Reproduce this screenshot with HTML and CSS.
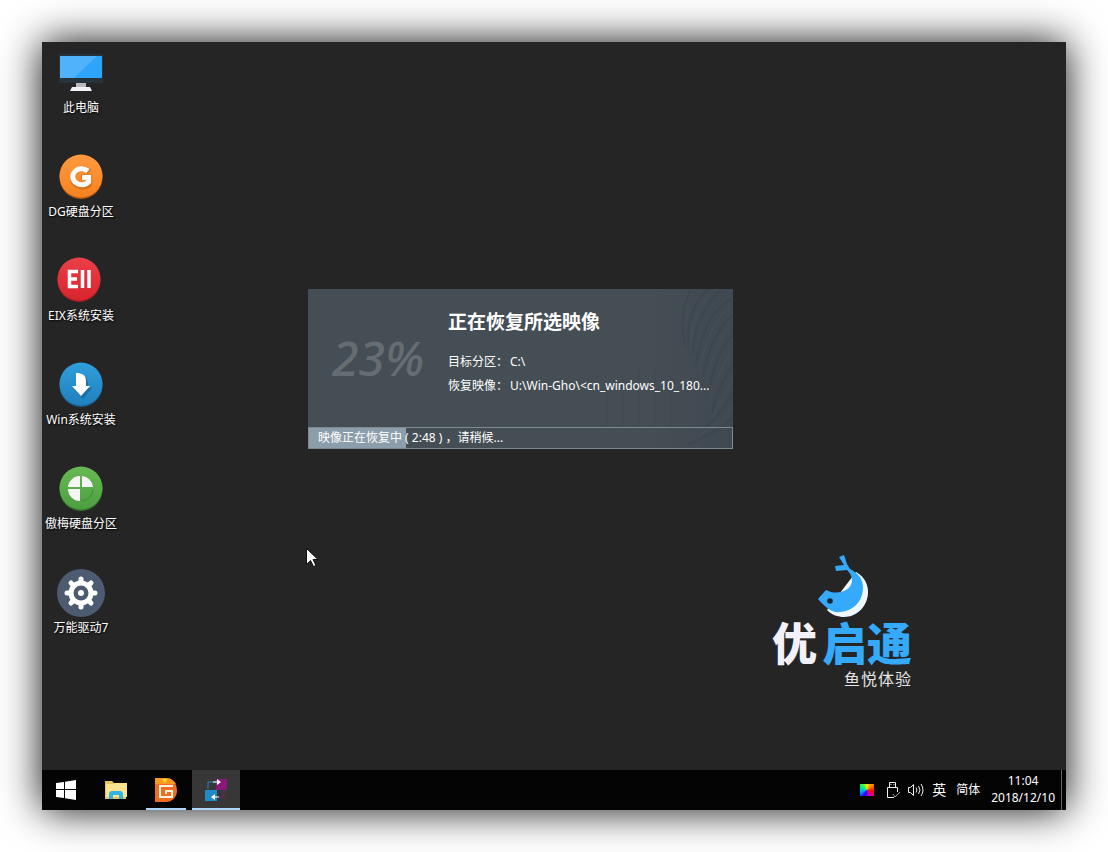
FILE: index.html
```
<!DOCTYPE html>
<html lang="zh-CN">
<head>
    <meta charset="UTF-8">
    <meta name="viewport" content="width=device-width, initial-scale=1.0">
    <title>优启通</title>
    <link rel="stylesheet" href="styles.css">
</head>
<body>
    <div class="screen">
        <main class="desktop">
            <div class="shortcuts">
                <button class="shortcut">
                    <svg class="shortcut-icon" viewBox="0 0 48 48">
                        <path d="M2 5h44v29H2z" fill="#26323c"/>
                        <path d="M3 7h42v22H3z" fill="#2ea4fa"/>
                        <path d="M3 7h37L17 29H3z" fill="#50b2fb"/>
                        <path d="M19 34h10v5H19z" fill="#b9b7c0"/>
                        <path d="M15 38h18l2 4H13z" fill="#f3f1f7"/>
                    </svg>
                    <span>此电脑</span>
                </button>
                <button class="shortcut">
                    <svg class="shortcut-icon" viewBox="0 0 48 48">
                        <defs><linearGradient id="orange" x2="0" y2="1"><stop stop-color="#ff9a40"/><stop offset="1" stop-color="#f5821f"/></linearGradient></defs>
                        <circle cx="24" cy="24.500" r="21.500" fill="#b85a14"/>
                        <circle cx="24" cy="23" r="21.500" fill="url(#orange)"/>
                        <path d="M32.500 18.500A10 9 0 1 0 32 32V24H24" fill="none" stroke="#c96516" stroke-width="5" opacity=".7"/>
                        <path d="M31 18A9 8 0 1 0 31.500 29V24.500H25" fill="none" stroke="#fbfbfb" stroke-width="5"/>
                    </svg>
                    <span>DG硬盘分区</span>
                </button>
                <button class="shortcut">
                    <svg class="shortcut-icon" viewBox="0 0 48 48">
                        <defs><linearGradient id="red" x2="0" y2="1"><stop stop-color="#ea4048"/><stop offset="1" stop-color="#d8242e"/></linearGradient></defs>
                        <circle cx="22" cy="23.500" r="21.500" fill="#a91d26"/>
                        <circle cx="22" cy="22" r="21.500" fill="url(#red)"/>
                        <path d="M21 14.500H12.500V29.500H21M12.500 22H20M25.500 13v18M32 13v18" fill="none" stroke="#fff" stroke-width="3.500"/>
                    </svg>
                    <span>EIX系统安装</span>
                </button>
                <button class="shortcut">
                    <svg class="shortcut-icon" viewBox="0 0 48 48">
                        <defs><linearGradient id="blue" x2="0" y2="1"><stop stop-color="#2f9edb"/><stop offset="1" stop-color="#2080bd"/></linearGradient></defs>
                        <circle cx="24" cy="24.500" r="21.500" fill="#195f91"/>
                        <circle cx="24" cy="23" r="21.500" fill="url(#blue)"/>
                        <path d="M21 14c6 0 10 2 10 9v4h4l-9 11-9-10h4z" fill="#17659a" opacity=".7"/>
                        <path d="M19 12c6 0 10 2 10 8v5h4l-9 10-9-10h4z" fill="#fff"/>
                    </svg>
                    <span>Win系统安装</span>
                </button>
                <button class="shortcut">
                    <svg class="shortcut-icon" viewBox="0 0 48 48">
                        <defs><linearGradient id="green" x2="0" y2="1"><stop stop-color="#68b955"/><stop offset="1" stop-color="#4d9e40"/></linearGradient></defs>
                        <circle cx="24" cy="24.500" r="21.500" fill="#34752b"/>
                        <circle cx="24" cy="23" r="21.500" fill="url(#green)"/>
                        <path d="M23 11v11H11a12 12 0 0 1 12-11zM25 11a12 12 0 0 1 11 11H25zM11 24h12v12a12 12 0 0 1-12-12z" fill="#f5f5f5"/>
                        <path d="M36 24a12 12 0 0 1-11 12" fill="none" stroke="#3f8a34"/>
                    </svg>
                    <span>傲梅硬盘分区</span>
                </button>
                <button class="shortcut">
                    <svg class="shortcut-icon" viewBox="0 0 48 48">
                        <circle cx="24" cy="24" r="24" fill="#4d5b71"/>
                        <g stroke="#fff" stroke-width="5" stroke-linecap="round">
                            <path d="M24 10v28M10 24h28M14 14l20 20M34 14L14 34"/>
                        </g>
                        <circle cx="24" cy="24" r="12.500" fill="#fff"/>
                        <circle cx="24" cy="24" r="7.500" fill="#4d5b71"/>
                        <circle cx="24" cy="24" r="3" fill="#fff"/>
                    </svg>
                    <span>万能驱动7</span>
                </button>
            </div>

            <section class="dialog" aria-labelledby="dialogTitle">
                <svg class="feather" viewBox="0 0 150 160" fill="none">
                    <defs><linearGradient id="shade"><stop stop-color="#3d474f" stop-opacity="0"/><stop offset="1" stop-color="#3d474f"/></linearGradient></defs>
                    <path d="M70 0h80v160H60z" fill="url(#shade)" opacity=".7"/>
                    <g stroke="#374149" stroke-width="2" opacity=".35">
                        <path d="M150 8Q120 26 113 76M150 26Q128 44 120 88M150 46Q134 62 126 100"/>
                        <path d="M125 0Q98 27 107 65M108 0Q95 24 102 56M139 0Q112 24 109 65"/>
                        <path d="M150 76Q138 91 129 124M150 104Q143 119 122 139M150 128Q138 142 104 156"/>
                    </g>
                    <g stroke="#5a6973" opacity=".22">
                        <path d="M150 16Q124 34 117 82M150 35Q131 52 124 94M150 60Q138 75 127 112M132 0Q105 25 108 65"/>
                        <path d="M150 90Q141 106 128 130M150 116Q143 131 114 147"/>
                    </g>
                    <g stroke="#3b454c" stroke-width="2" opacity=".12">
                        <path d="M24 140v-35M40 138V90M56 140V78M72 138V82M88 140V86"/>
                    </g>
                </svg>
                <div class="dialog-main">
                    <div class="percent">23%</div>
                    <div class="details">
                        <h1 id="dialogTitle">正在恢复所选映像</h1>
                        <p>目标分区：<span>C:\</span></p>
                        <p>恢复映像：<span>U:\Win-Gho\&lt;cn_windows_10_180...</span></p>
                    </div>
                </div>
                <div class="progress" role="progressbar" aria-label="恢复进度" aria-valuenow="23" aria-valuemin="0" aria-valuemax="100">
                    <div class="progress-fill" style="width: 23%"></div>
                    <span class="progress-text">映像正在恢复中 ( 2:48 ) ，请稍候...</span>
                </div>
            </section>

            <div class="brand">
                <svg class="fish" viewBox="0 0 52 64">
                    <path d="M38 18C47 23 50 31 50 38C50 52 39 63 26 63C20 63 14 61 9 56z" fill="#f0f8ff"/>
                    <path d="M0 45L8 36L13 38C23 40 33 36 34 27C34 22 32 19 29 16L18 17L17 12L26 11L21 3L26 1L29 10L32 15C40 19 45 25 45 33C45 48 35 57 22 58C14 59 9 55 0 45z" fill="#35aafa"/>
                    <circle cx="12" cy="47" r="2.800" fill="#172631"/>
                </svg>
                <div class="brand-name">优<span>启通</span></div>
                <div class="slogan">鱼悦体验</div>
            </div>

            <svg class="cursor" viewBox="0 0 12 20">
                <path d="M.5.5v16l4-4 3 6 2.500-1-3-6h5z" fill="#fff" stroke="#111"/>
            </svg>
        </main>

        <footer class="taskbar">
            <button class="task" aria-label="开始">
                <svg width="20" height="20" viewBox="0 0 20 20" fill="#fff"><path d="M0 3l8-1v7H0zM9 1.800L20 0v9H9zM0 10h8v8l-8-1zM9 10h11v10L9 18.300z"/></svg>
            </button>
            <button class="task" aria-label="文件资源管理器">
                <svg width="22" height="20" viewBox="0 0 22 20">
                    <path d="M0 1h7l2 2h12v16H0z" fill="#e8c45e"/>
                    <path d="M1 4h8l1-1h12v14H1z" fill="#fce48f"/>
                    <path d="M4 19v-6l2-2h10l2 2v6h-4v-4H8v4z" fill="#2fb5e4"/>
                </svg>
            </button>
            <button class="task open" aria-label="DiskGenius">
                <svg width="22" height="24" viewBox="0 0 22 24">
                    <path d="M0 0h11c7 0 11 6 11 13 0 6-5 11-11 11H0z" fill="#ef6c23"/>
                    <path d="M0 0h11c5 0 8 3 10 6H0z" fill="#f99a1f"/>
                    <path d="M7 1h5l-2 4z" fill="#ffe23b"/>
                    <path d="M18 8H5v11h12v-6h-6v3" fill="none" stroke="#fff1dc" stroke-width="2"/>
                </svg>
            </button>
            <button class="task open active" aria-label="映像恢复">
                <svg width="24" height="24" viewBox="0 0 24 24">
                    <path d="M12 1h11v11H12z" fill="#881779"/>
                    <path d="M1 12h12v11H1z" fill="#2089ca"/>
                    <path d="M4 11V4h8" fill="none" stroke="#278ac5"/>
                    <path d="M20 13v6h-6" fill="none" stroke="#732268"/>
                    <path d="M9 4h6M15 19H9" fill="none" stroke="#fff"/>
                    <path d="M13 1l4 3-4 3zM11 16l-4 3 4 3z" fill="#fff"/>
                </svg>
            </button>
            <div class="tray">
                <span class="palette"></span>
                <svg width="14" height="18" viewBox="0 0 14 18" fill="none" stroke="#eee">
                    <path d="M3.500 6V1.500h6V6M8 16.500H1.500v-10h10V11M5 3v1M8 3v1"/>
                    <path d="M7 13l2 3 5-5" stroke="#aaa"/>
                </svg>
                <svg width="18" height="14" viewBox="0 0 18 14" fill="none" stroke="#eee">
                    <path d="M1.500 4.500h2l3-3v11l-3-3h-2zM9 4.500q2 2.500 0 5M11.500 3q3 4 0 8M14 1q4 6 0 12"/>
                </svg>
                <button class="lang">英</button>
                <button class="ime">简体</button>
                <time class="clock" datetime="2018-12-10T11:04">11:04<br>2018/12/10</time>
                <button class="show-desktop" aria-label="显示桌面"></button>
            </div>
        </footer>
    </div>
</body>
</html>
```
FILE: styles.css
```
* {
    box-sizing: border-box;
}
body {
    margin: 0;
    padding: 42px;
    min-height: 100vh;
    display: flex;
    background-color: #fff;
    color: #fff;
    font-family: 'Noto Sans', 'Noto Sans CJK SC', sans-serif;
    font-size: 12px;
    line-height: 16px;
}
button {
    padding: 0;
    border: 0;
    background: none;
    color: inherit;
    font: inherit;
}
.screen {
    flex: 1;
    display: flex;
    flex-direction: column;
    box-shadow: 0 0 38px rgba(0, 0, 0, 0.95);
}
.desktop {
    flex: 1;
    position: relative;
    background-color: #252525;
}

/* desktop icons */
.shortcuts {
    width: 78px;
    padding-top: 7px;
    display: flex;
    flex-direction: column;
    gap: 37px;
}
.shortcut {
    display: flex;
    flex-direction: column;
    align-items: center;
    gap: 3px;
    white-space: nowrap;
    text-shadow: 1px 1px 2px #000;
}
.shortcut-icon {
    width: 48px;
    height: 48px;
}

/* restore window */
.dialog {
    position: absolute;
    left: 266px;
    top: 247px;
    width: 425px;
    background-color: #464e55;
}
.feather {
    position: absolute;
    right: 0;
    top: 0;
    width: 150px;
    height: 100%;
}
.dialog-main {
    position: relative;
    display: flex;
    padding: 21px 0 29px;
}
.percent {
    width: 140px;
    padding: 16px 0 0 24px;
    color: #656c72;
    font-size: 48px;
    font-style: italic;
    font-weight: 500;
    line-height: 64px;
}
.details h1 {
    margin: 0 0 16px;
    font-size: 19px;
    line-height: 24px;
}
.details p {
    margin: 0;
    line-height: 24px;
}
.details p span {
    margin-left: 2px;
}
.progress {
    position: relative;
    height: 22px;
    border: 1px solid #7e8990;
}
.progress-fill {
    height: 100%;
    background-color: #8c9dac;
}
.progress-text {
    position: absolute;
    left: 9px;
    top: 2px;
}

/* wallpaper logo */
.brand {
    position: absolute;
    left: 730px;
    top: 512px;
    width: 140px;
    display: flex;
    flex-direction: column;
}
.fish {
    width: 52px;
    height: 64px;
    margin-left: 46px;
}
.brand-name {
    display: flex;
    justify-content: space-between;
    color: #f2f1fa;
    font-family: 'Noto Sans CJK SC', sans-serif;
    font-size: 45px;
    font-weight: 900;
    line-height: 48px;
    white-space: nowrap;
}
.brand-name span {
    color: #35aafa;
}
.slogan {
    margin-top: 2px;
    color: #e4e4e4;
    font-family: 'Noto Sans CJK SC', sans-serif;
    font-size: 16px;
    letter-spacing: 1px;
    line-height: 20px;
    text-align: right;
}
.cursor {
    position: absolute;
    left: 264px;
    top: 506px;
    width: 12px;
    height: 20px;
}

/* taskbar */
.taskbar {
    display: flex;
    gap: 2px;
    height: 40px;
    background-color: #040404;
}
.task {
    width: 48px;
    display: flex;
    align-items: center;
    justify-content: center;
}
.open {
    background: linear-gradient(#add6ff, #add6ff) center bottom / 40px 2px no-repeat;
}
.active {
    background-color: #373737;
    background-size: 100% 2px;
}
.tray {
    margin-left: auto;
    display: flex;
    align-items: center;
}
.tray svg {
    margin-right: 7px;
}
.palette {
    width: 14px;
    height: 12px;
    margin-right: 12px;
    background: conic-gradient(#ffe600, #ff7a00, #f00, #d000c0, #2000ff, #00b0ff, #00ff60, #ffe600);
}
.lang {
    font-size: 14px;
    margin-right: 10px;
}
.ime {
    margin-right: 11px;
}
.clock {
    text-align: center;
    line-height: 17px;
    padding-bottom: 2px;
    margin-right: 6px;
}
.show-desktop {
    width: 5px;
    height: 40px;
    border-left: 1px solid #666;
}
```
